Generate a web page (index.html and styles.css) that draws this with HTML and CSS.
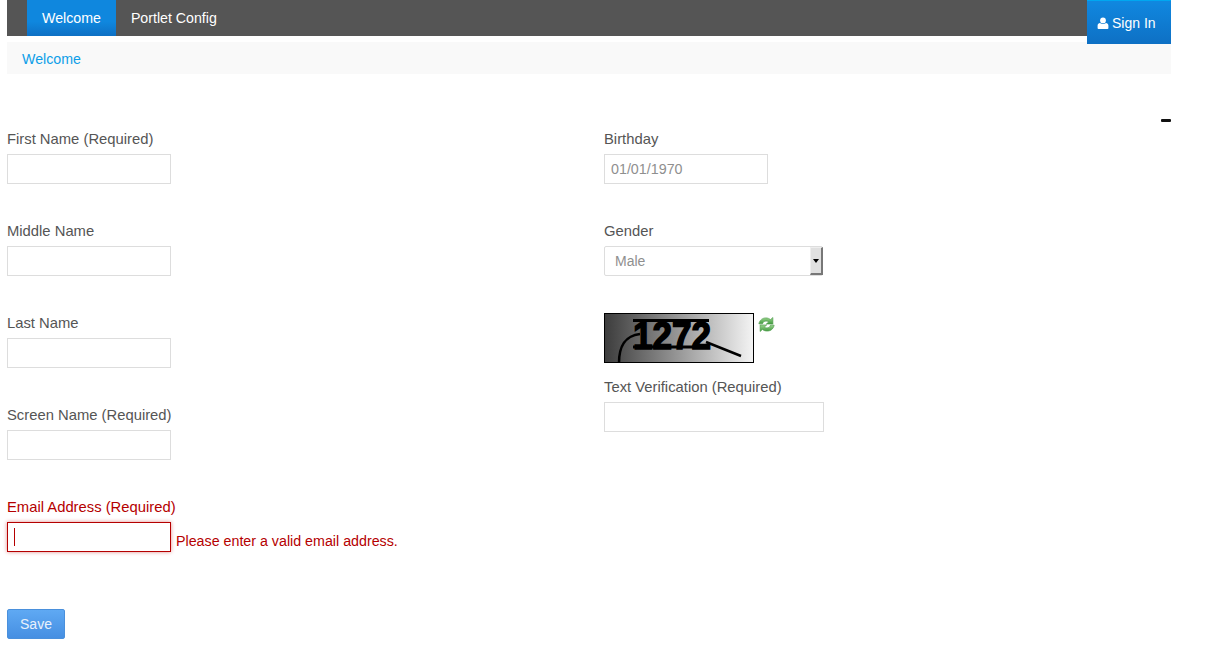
FILE: index.html
```html
<!DOCTYPE html>
<html lang="en">
<head>
<meta charset="utf-8">
<title>Create Account</title>
<link rel="stylesheet" href="styles.css">
</head>
<body>
<div class="page">
  <header class="topbar">
    <nav class="tabs">
      <a class="tab tab-active" href="#">Welcome</a>
      <a class="tab" href="#">Portlet Config</a>
    </nav>
    <a class="signin" href="#">
      <svg class="user-icon" viewBox="0 0 12 12" width="12" height="12" aria-hidden="true"><circle cx="6" cy="3.4" r="2.9" fill="#fff"/><path d="M0.6 11.2V8.6C0.6 7 1.8 6 3 6C3.8 6.7 4.8 7 6 7S8.2 6.7 9 6C10.2 6 11.4 7 11.4 8.6V11.2C11.4 11.7 11 12 10.5 12H1.5C1 12 .6 11.7 .6 11.2Z" fill="#fff"/></svg>
      Sign In
    </a>
  </header>
  <div class="breadcrumb"><a href="#">Welcome</a></div>
  <div class="collapse-row"><span class="collapse-mark"></span></div>
  <form class="form">
    <div class="columns">
      <div class="col">
        <div class="field"><label class="label">First Name (Required)</label><input class="input" type="text"></div>
        <div class="field"><label class="label">Middle Name</label><input class="input" type="text"></div>
        <div class="field"><label class="label">Last Name</label><input class="input" type="text"></div>
        <div class="field"><label class="label">Screen Name (Required)</label><input class="input" type="text"></div>
        <div class="field field-error">
          <label class="label">Email Address (Required)</label>
          <div class="error-row">
            <div class="caret-wrap"><input class="input input-error" type="text"><span class="caret"></span></div>
            <span class="error-msg">Please enter a valid email address.</span>
          </div>
        </div>
      </div>
      <div class="col">
        <div class="field"><label class="label">Birthday</label><input class="input input-muted" type="text" value="01/01/1970"></div>
        <div class="field"><label class="label">Gender</label>
          <div class="select-wrap">
            <select class="select"><option>Male</option><option>Female</option></select>
            <span class="select-btn"><span class="select-arrow"></span></span>
          </div>
        </div>
        <div class="captcha-row">
          <svg class="captcha" width="150" height="50" viewBox="0 0 150 50" role="img" aria-label="captcha">
            <defs><linearGradient id="cg" x1="0" x2="1" y1="0" y2="0"><stop offset="0" stop-color="#3c3c3c"/><stop offset="1" stop-color="#f4f4f4"/></linearGradient></defs>
            <rect x="0.5" y="0.5" width="149" height="49" fill="url(#cg)" stroke="#000"/>
            <path d="M15 50C15 34 20 23 36 21" fill="none" stroke="#000" stroke-width="2.5"/>
            <path d="M102 29L137 43" fill="none" stroke="#000" stroke-width="2.5"/>
            <text class="captcha-text" x="29" y="36" textLength="78" lengthAdjust="spacingAndGlyphs">1272</text>
            <path d="M29 7.5H105M29 34H102" stroke="#000" stroke-width="3" fill="none"/>
          </svg>
          <svg class="refresh" viewBox="0 0 16 16" width="17" height="17" aria-hidden="true">
            <defs>
              <linearGradient id="rg" x1="0" x2="0" y1="0" y2="1"><stop offset="0" stop-color="#9bd48e"/><stop offset="1" stop-color="#3f9a3d"/></linearGradient>
            </defs>
            <path d="M.8 7.4C1.6 3.6 4.4 1.8 7.4 1.8C9.2 1.8 10.6 2.4 11.8 3.4L14 1.4V7.6H7.8L10 5.6C9.2 5 8.5 4.8 7.6 4.8C5.8 4.8 4.8 5.8 4.2 7.4Z" fill="url(#rg)" stroke="#4d9a4a" stroke-width=".6"/>
            <path d="M15.2 8.6C14.4 12.4 11.6 14.2 8.6 14.2C6.8 14.2 5.4 13.6 4.2 12.6L2 14.6V8.4H8.2L6 10.4C6.8 11 7.5 11.2 8.4 11.2C10.2 11.2 11.2 10.2 11.8 8.6Z" fill="url(#rg)" stroke="#4d9a4a" stroke-width=".6"/>
          </svg>
        </div>
        <div class="field"><label class="label">Text Verification (Required)</label><input class="input input-wide" type="text"></div>
      </div>
    </div>
    <button class="save" type="button">Save</button>
  </form>
</div>
</body>
</html>
```

FILE: styles.css
```css
* { box-sizing: border-box; }
html, body { margin: 0; padding: 0; background: #fff; }
body { font-family: "Liberation Sans", Arial, sans-serif; font-size: 14px; color: #555; overflow: hidden; }
a { text-decoration: none; }

.page { width: 1171px; height: 651px; padding-left: 7px; }

.topbar { position: relative; height: 36px; background: #555; padding-left: 20px; }
.tabs { display: flex; height: 36px; }
.tab { display: block; padding: 0 15px; line-height: 36px; color: #fff; font-size: 14.2px; }
.tab-active { background: linear-gradient(#0f87de, #0f87de 60%, #0e70c4); }

.signin {
  position: absolute; top: 0; right: 0; width: 84px; height: 44px;
  display: flex; align-items: center; gap: 3px;
  padding: 0 0 0 10px;
  border-top: 1px solid #00a7f0;
  background: linear-gradient(#1088e0, #0e70c4);
  color: #fff; font-size: 14px;
}
.user-icon { display: block; flex: none; }

.breadcrumb { margin-top: 6px; height: 32px; padding-left: 15px; background: #f9f9f9; line-height: 34px; font-size: 14.2px; }
.breadcrumb a { color: #0d9ee8; }

.collapse-row { display: flex; justify-content: flex-end; height: 45px; padding-top: 45px; }
.collapse-mark { display: block; width: 10px; height: 3px; background: #111; border-radius: 1px; }

.form { display: block; margin-top: 10px; }
.columns { display: grid; grid-template-columns: 597px 1fr; height: 480px; }
.field { margin-bottom: 37px; }
.label { display: block; height: 25px; line-height: 20px; color: #555; font-size: 14.8px; }
.input {
  display: block; width: 164px; height: 30px; padding: 0 6px;
  border: 1px solid #ddd; background: #fff; outline: none;
  font: 14px "Liberation Sans", Arial, sans-serif; color: #555;
}
.input-muted { color: #8f8f8f; font-size: 14.3px; }
.input-wide { width: 220px; }

.select-wrap { position: relative; width: 219px; height: 30px; }
.select {
  display: block; width: 100%; height: 30px; padding: 0 0 0 10px;
  border: 1px solid #ddd; border-radius: 2px; background: #fff; outline: none;
  appearance: none; -webkit-appearance: none;
  font: 14px "Liberation Sans", Arial, sans-serif; color: #8f8f8f;
}
.select-btn {
  position: absolute; top: 1px; right: 0; width: 13px; height: 28px;
  display: flex; align-items: center; justify-content: center;
  background: #e0e0e0;
  border-right: 2px solid #777; border-bottom: 2px solid #777;
  border-top: 1px solid #eee; border-left: 1px solid #eee;
}
.select-arrow { display: block; width: 0; height: 0; border: 3.5px solid transparent; border-top: 4px solid #000; border-bottom: 0; }

.captcha-row { display: flex; align-items: flex-start; gap: 4px; margin-bottom: 14px; }
.captcha { display: block; flex: none; }
.captcha-text { font: 900 39px "Liberation Sans", Arial, sans-serif; fill: #000; stroke: #000; stroke-width: 1.6; }
.refresh { display: block; margin-top: 3px; }

.field-error .label { color: #b50000; }
.error-row { display: flex; align-items: center; gap: 5px; }
.caret-wrap { position: relative; }
.input-error { border-color: #b50000; box-shadow: 0 0 4px rgba(190, 0, 0, .45); }
.caret { position: absolute; left: 7px; top: 6px; width: 1px; height: 18px; background: #b50000; }
.error-msg { color: #b50000; padding-top: 8px; font-size: 14.25px; }

.save {
  display: block; width: 58px; height: 30px; margin-top: 0;
  border: 1px solid #4a90dc; border-radius: 2px;
  background: linear-gradient(#5fa9f3, #468fe2);
  color: #e8f1fb; font: 14px "Liberation Sans", Arial, sans-serif;
}
```
